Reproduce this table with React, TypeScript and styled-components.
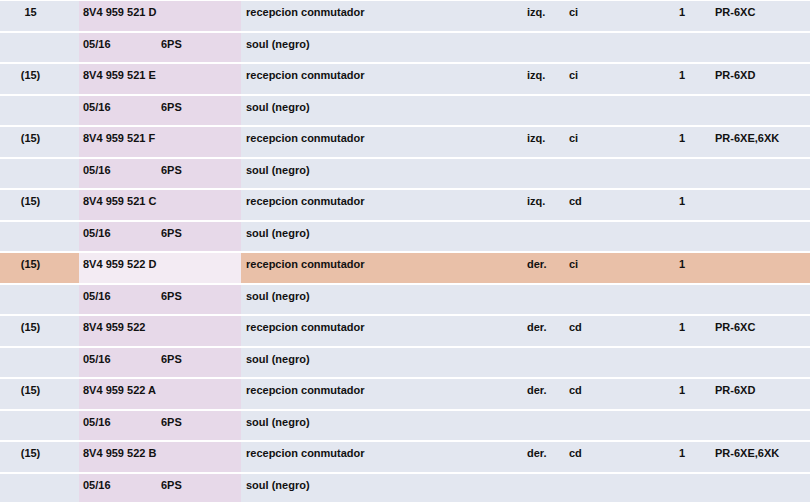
import React from 'react'
import styled, { createGlobalStyle } from 'styled-components'

const GlobalStyle = createGlobalStyle`
    html, body {
        margin: 0;
        padding: 0;
        background: #ffffff;
    }
    body {
        font-family: "Liberation Sans", Arial, sans-serif;
        font-size: 11px;
        font-weight: bold;
        color: #111;
    }
`

interface PartItem {
    pos: string
    part: string
    desc: string
    side: string
    kind: string
    qty: string
    code: string
    active?: boolean
}

const parts: PartItem[] = [
    { pos: '15', part: '8V4 959 521 D', desc: 'recepcion conmutador', side: 'izq.', kind: 'ci', qty: '1', code: 'PR-6XC' },
    { pos: '(15)', part: '8V4 959 521 E', desc: 'recepcion conmutador', side: 'izq.', kind: 'ci', qty: '1', code: 'PR-6XD' },
    { pos: '(15)', part: '8V4 959 521 F', desc: 'recepcion conmutador', side: 'izq.', kind: 'ci', qty: '1', code: 'PR-6XE,6XK' },
    { pos: '(15)', part: '8V4 959 521 C', desc: 'recepcion conmutador', side: 'izq.', kind: 'cd', qty: '1', code: '' },
    { pos: '(15)', part: '8V4 959 522 D', desc: 'recepcion conmutador', side: 'der.', kind: 'ci', qty: '1', code: '', active: true },
    { pos: '(15)', part: '8V4 959 522', desc: 'recepcion conmutador', side: 'der.', kind: 'cd', qty: '1', code: 'PR-6XC' },
    { pos: '(15)', part: '8V4 959 522 A', desc: 'recepcion conmutador', side: 'der.', kind: 'cd', qty: '1', code: 'PR-6XD' },
    { pos: '(15)', part: '8V4 959 522 B', desc: 'recepcion conmutador', side: 'der.', kind: 'cd', qty: '1', code: 'PR-6XE,6XK' },
]

export default function App() {
    return (
        <>
            <GlobalStyle />
            <Table>
                {parts.map((p, k) => (
                    <React.Fragment key={k}>
                        <Row $active={p.active}>
                            <PosCell>{p.pos}</PosCell>
                            <PartCell $active={p.active}>{p.part}</PartCell>
                            <DescCell>{p.desc}</DescCell>
                            <Cell>{p.side}</Cell>
                            <Cell>{p.kind}</Cell>
                            <Cell>{p.qty}</Cell>
                            <Cell>{p.code}</Cell>
                        </Row>
                        <Row>
                            <PosCell />
                            <PartCell $split>
                                <span>05/16</span>
                                <span>6PS</span>
                            </PartCell>
                            <DescCell>soul (negro)</DescCell>
                            <Cell />
                            <Cell />
                            <Cell />
                            <Cell />
                        </Row>
                    </React.Fragment>
                ))}
            </Table>
        </>
    )
}

const Table = styled.div`
    width: 810px;
    display: flex;
    flex-direction: column;
    gap: 2px;
    padding-top: 1px;
`

const Row = styled.div<{ $active?: boolean }>`
    display: grid;
    grid-template-columns: 79px 162px 282px 42px 110px 36px 99px;
    height: 29.5px;
    background-color: ${p => p.$active ? '#e9c0a8' : '#e3e7f0'};
`

const Cell = styled.div`
    padding: 5px 0 0 4px;
    line-height: 13px;
    white-space: nowrap;
    overflow: hidden;
`

const PosCell = styled(Cell)`
    padding-left: 0;
    padding-right: 18px;
    text-align: center;
`

const PartCell = styled(Cell)<{ $active?: boolean, $split?: boolean }>`
    background-color: ${p => p.$active ? '#f3ebf3' : '#e7d9e9'};
    display: ${p => p.$split ? 'grid' : 'block'};
    grid-template-columns: 78px 1fr;
`

const DescCell = styled(Cell)`
    padding-left: 5px;
`
